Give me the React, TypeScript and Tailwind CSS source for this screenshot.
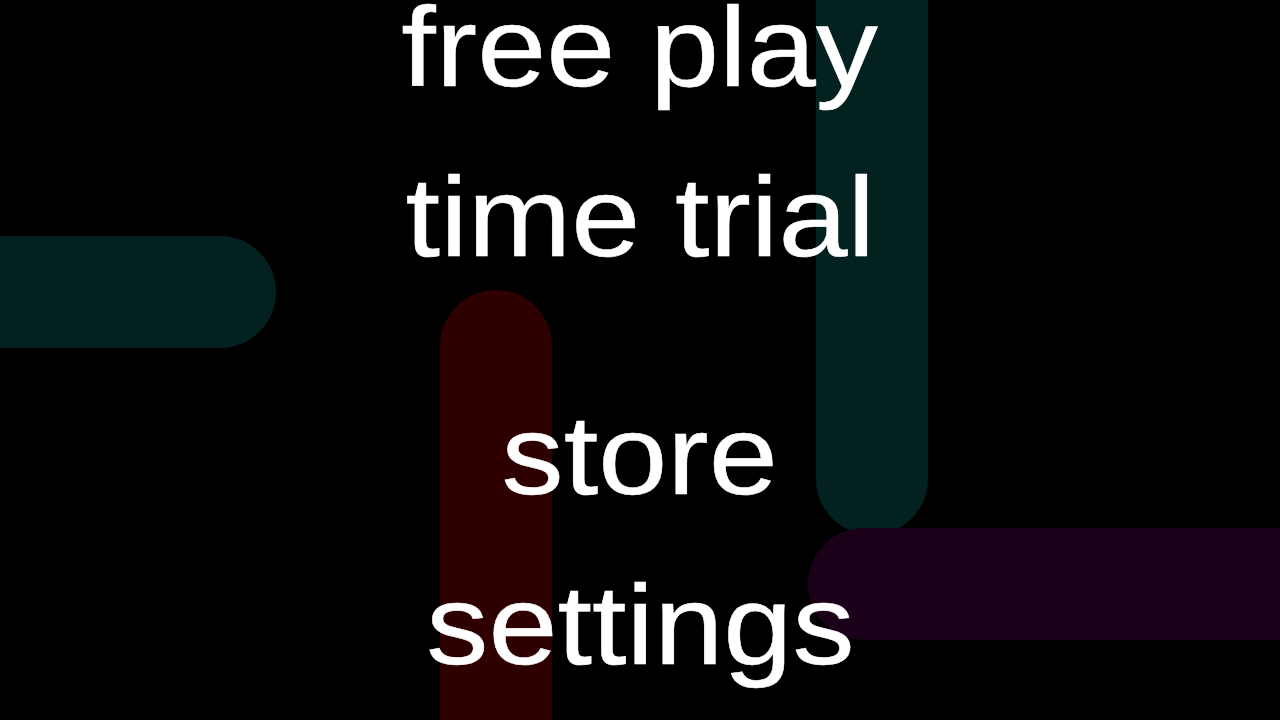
const MENU = ['free play', 'time trial', 'store', 'settings'];

function Pills() {
  return (
    <div className="pointer-events-none absolute inset-0 overflow-hidden">
      <div className="absolute left-[-120px] top-[236px] h-[112px] w-[396px] rounded-full bg-[#03221f]" />
      <div className="absolute left-[440px] top-[290px] h-[560px] w-[112px] rounded-full bg-[#2e0000]" />
      <div className="absolute left-[816px] top-[-200px] h-[735px] w-[112px] rounded-full bg-[#03221f]" />
      <div className="absolute left-[808px] top-[528px] h-[112px] w-[600px] rounded-full bg-[#1a0018]" />
    </div>
  );
}

export default function App() {
  return (
    <div className="relative h-[720px] w-[1280px] overflow-hidden bg-black font-['Liberation_Sans',Arial,sans-serif]">
      <Pills />
      <nav className="relative mt-[-38px] flex flex-col items-center text-white">
        {MENU.map((label) => (
          <button
            key={label}
            className={`scale-x-[1.09] text-[114px] leading-[170px] [-webkit-text-stroke:0.5px_white] ${label === 'store' ? 'mt-[68px]' : ''}`}
          >
            {label}
          </button>
        ))}
      </nav>
    </div>
  );
}
